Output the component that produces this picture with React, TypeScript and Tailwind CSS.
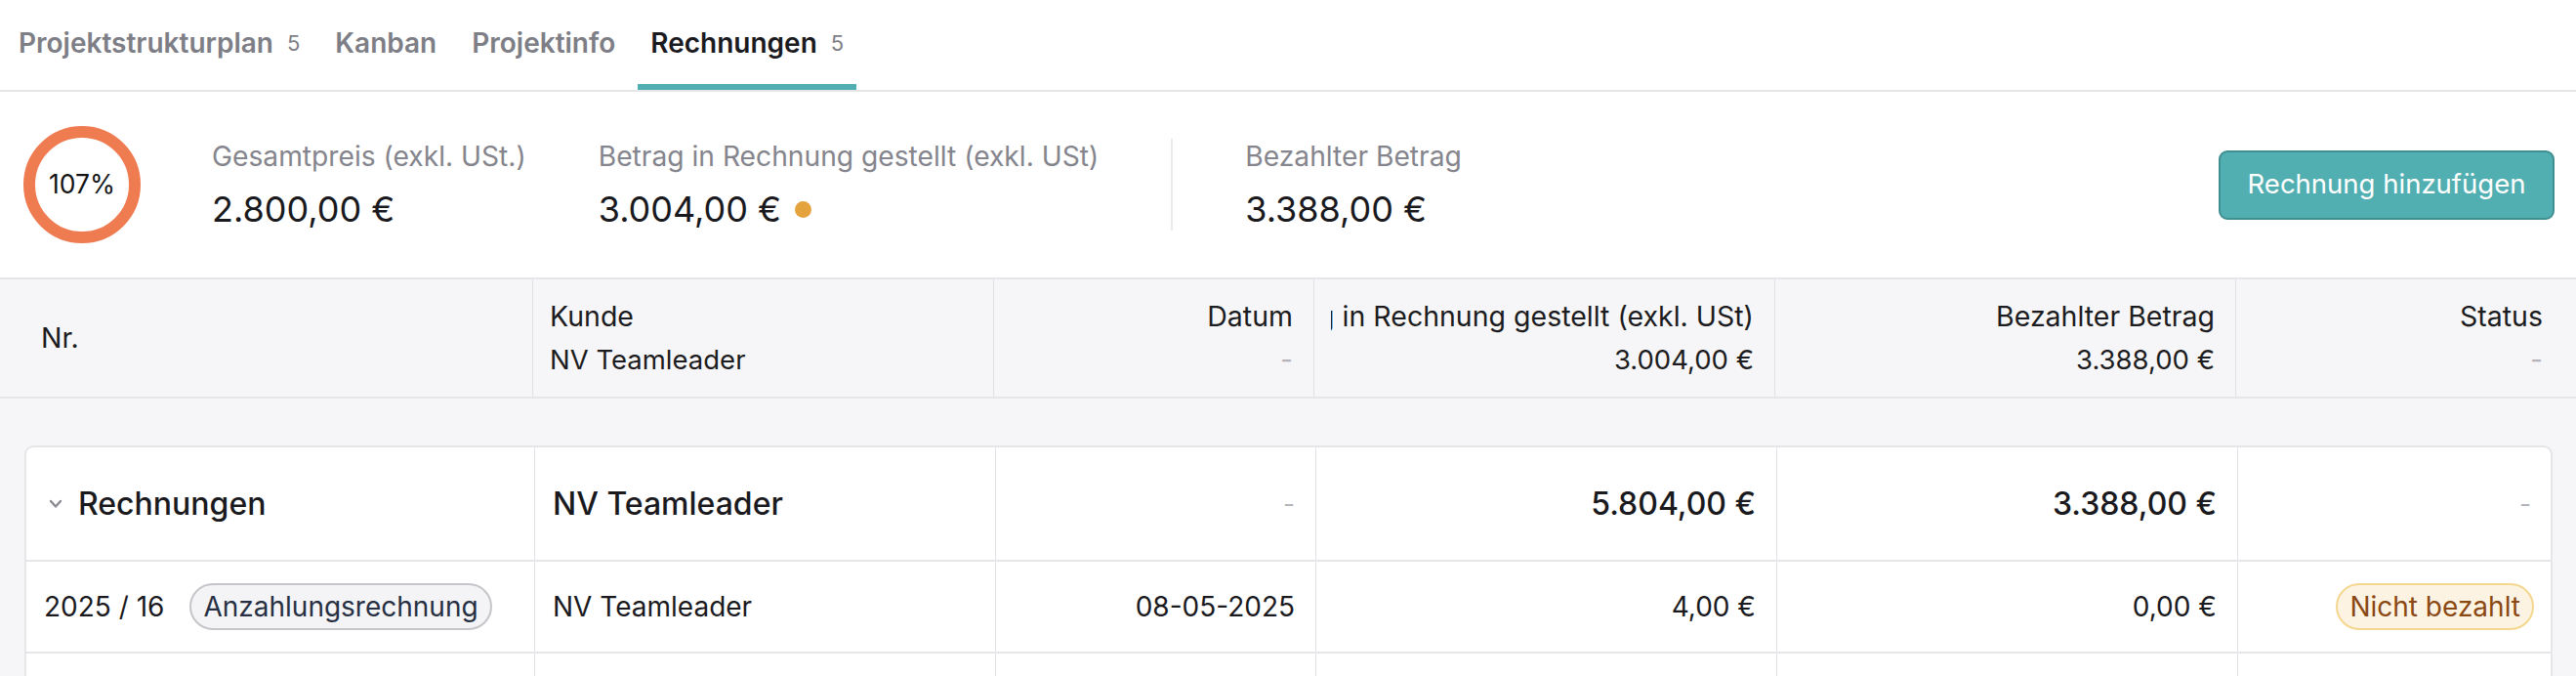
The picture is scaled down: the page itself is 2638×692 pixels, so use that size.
import React from "react";

const COLS_HEAD = "grid grid-cols-[545px_472px_328px_472px_472px_1fr]";
const COLS_CARD = "grid grid-cols-[520px_472px_328px_472px_472px_1fr]";

function Tab({ label, count, active }: { label: string; count?: number; active?: boolean }) {
  return (
    <div
      className={
        "h-[92px] px-[13px] pt-[2px] flex items-center border-b-[6px] " +
        (active ? "border-[#52afb1]" : "border-transparent")
      }
    >
      <span className={"text-[28px] font-semibold " + (active ? "text-[#1b1b1f]" : "text-[#7e7e86]")}>{label}</span>
      {count !== undefined && <span className="ml-[14px] text-[22px] text-[#7e7e86]">{count}</span>}
    </div>
  );
}

function Stat({ label, value, dot }: { label: string; value: string; dot?: boolean }) {
  return (
    <div className="flex flex-col">
      <div className="text-[28.2px] leading-[40px] text-[#85858d]">{label}</div>
      <div className="mt-[10px] flex items-center text-[36px] leading-[48px] text-[#1a1a1e]">
        {value}
        {dot && <span className="ml-[14px] inline-block h-[17px] w-[17px] rounded-full bg-[#e4a33c]" />}
      </div>
    </div>
  );
}

function Dash() {
  return <span className="text-[#b3b3b9]">-</span>;
}

function HeadCell({ title, sub, right, first, last }: { title: string; sub?: React.ReactNode; right?: boolean; first?: boolean; last?: boolean }) {
  return (
    <div
      className={
        "flex min-w-0 flex-col justify-center " +
        (first ? "pl-[42px] pr-[20px] " : "border-l border-[#e2e2e6] pl-[17px] ") +
        (last ? "pr-[34px] " : first ? "" : "pr-[21px] ") +
        (right ? "items-stretch text-right" : "")
      }
    >
      <div className={"flex overflow-hidden whitespace-nowrap " + (right ? "justify-end" : "justify-start")}>
        <span className="shrink-0 text-[28.5px] leading-[40px] text-[#1c1c20]">{title}</span>
      </div>
      {sub !== undefined && (
        <div className="mt-[4px] text-[27.5px] leading-[40px] text-[#1c1c20]">{sub}</div>
      )}
    </div>
  );
}

export default function App() {
  return (
    <div className="h-[692px] w-[2638px] overflow-hidden bg-white font-['Inter','Noto_Sans',sans-serif]">
      {/* Tabs */}
      <div className="flex h-[94px] gap-[10px] border-b-2 border-[#e6e6e9] pl-[6px]">
        <Tab label="Projektstrukturplan" count={5} />
        <Tab label="Kanban" />
        <Tab label="Projektinfo" />
        <Tab label="Rechnungen" count={5} active />
      </div>

      {/* Summary */}
      <div className="flex h-[192px] items-center gap-[74px] border-b-2 border-[#e6e6e9] pl-[24px] pr-[22px]">
        <div className="relative mr-[-1px] flex h-[120px] w-[120px] shrink-0 items-center justify-center">
          <svg width="120" height="120" viewBox="0 0 120 120" className="absolute inset-0">
            <circle cx="60" cy="60" r="54" fill="none" stroke="#ef7b51" strokeWidth="12" />
          </svg>
          <span className="relative text-[26.5px] text-[#141416]">107%</span>
        </div>
        <Stat label="Gesamtpreis (exkl. USt.)" value="2.800,00 €" />
        <Stat label="Betrag in Rechnung gestellt (exkl. USt)" value="3.004,00 €" dot />
        <div className="h-[94px] w-[2px] bg-[#ebebee]" />
        <Stat label="Bezahlter Betrag" value="3.388,00 €" />
        <div className="ml-auto">
          <button className="flex h-[71px] w-[344px] items-center justify-center rounded-[9px] border-2 border-[#3f8f91] bg-[#52afb1] text-[27.5px] text-white">
            Rechnung hinzufügen
          </button>
        </div>
      </div>

      {/* Table header */}
      <div className={COLS_HEAD + " h-[122px] border-b-2 border-[#e6e6e9] bg-[#f6f6f8]"}>
        <HeadCell title="Nr." first />
        <HeadCell title="Kunde" sub="NV Teamleader" />
        <HeadCell title="Datum" sub={<Dash />} right />
        <HeadCell title="Betrag in Rechnung gestellt (exkl. USt)" sub="3.004,00 €" right />
        <HeadCell title="Bezahlter Betrag" sub="3.388,00 €" right />
        <HeadCell title="Status" sub={<Dash />} right last />
      </div>

      {/* Body */}
      <div className="bg-[#f6f6f8] pl-[25px] pr-[24px] pt-[48px]">
        <div className="rounded-t-[9px] border-2 border-[#e6e6e9] bg-white">
          {/* Group row */}
          <div className={COLS_CARD + " h-[117px] border-b-2 border-[#e6e6e9] text-[32px] font-medium text-[#1a1a1e]"}>
            <div className="flex items-center pl-[23px]">
              <svg width="14" height="10" viewBox="0 0 14 10" className="mr-[16px]">
                <polyline points="2,2 7,7.5 12,2" fill="none" stroke="#8b8b93" strokeWidth="2.4" strokeLinecap="round" strokeLinejoin="round" />
              </svg>
              Rechnungen
            </div>
            <div className="flex items-center border-l border-[#e2e2e6] pl-[18px]">NV Teamleader</div>
            <div className="flex items-center justify-end border-l border-[#e2e2e6] pr-[21px] text-[26px] font-normal"><Dash /></div>
            <div className="flex items-center justify-end border-l border-[#e2e2e6] pr-[21px]">5.804,00 €</div>
            <div className="flex items-center justify-end border-l border-[#e2e2e6] pr-[21px]">3.388,00 €</div>
            <div className="flex items-center justify-end border-l border-[#e2e2e6] pr-[20px] text-[26px] font-normal"><Dash /></div>
          </div>
          {/* Data row */}
          <div className={COLS_CARD + " h-[94px] border-b-2 border-[#e6e6e9] text-[28px] text-[#1a1a1e]"}>
            <div className="flex items-center pl-[18px]">
              <span>2025 / 16</span>
              <span className="ml-[26px] flex h-[48px] items-center rounded-full border-2 border-[#c5c5ca] bg-[#f4f4f7] px-[12px] text-[#273042]">
                Anzahlungsrechnung
              </span>
            </div>
            <div className="flex items-center border-l border-[#e2e2e6] pl-[18px]">NV Teamleader</div>
            <div className="flex items-center justify-end border-l border-[#e2e2e6] pr-[21px]">08-05-2025</div>
            <div className="flex items-center justify-end border-l border-[#e2e2e6] pr-[21px]">4,00 €</div>
            <div className="flex items-center justify-end border-l border-[#e2e2e6] pr-[21px]">0,00 €</div>
            <div className="flex items-center justify-end border-l border-[#e2e2e6] pr-[17px]">
              <span className="flex h-[48px] items-center rounded-full border-2 border-[#f5d68f] bg-[#fdf3e2] px-[12px] text-[#8a4813]">
                Nicht bezahlt
              </span>
            </div>
          </div>
          {/* Next row (partially visible) */}
          <div className={COLS_CARD + " h-[94px] text-[28px] text-[#1a1a1e]"}>
            <div />
            <div className="border-l border-[#e2e2e6]" />
            <div className="border-l border-[#e2e2e6]" />
            <div className="border-l border-[#e2e2e6]" />
            <div className="border-l border-[#e2e2e6]" />
            <div className="border-l border-[#e2e2e6]" />
          </div>
        </div>
      </div>
    </div>
  );
}
